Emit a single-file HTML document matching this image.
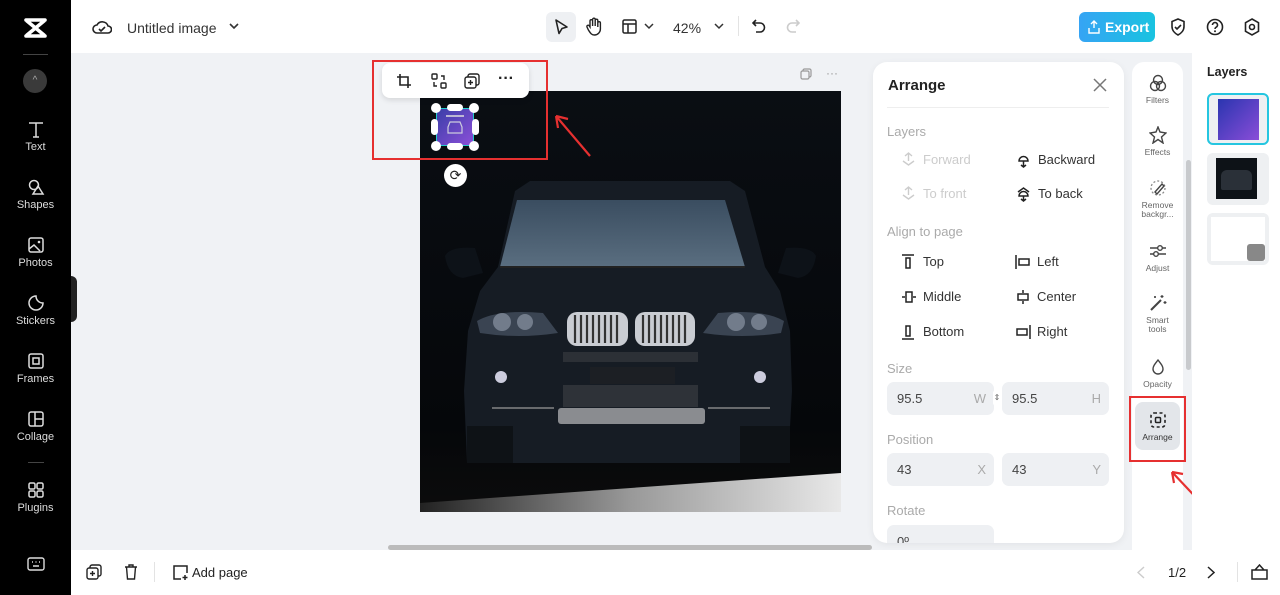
<!DOCTYPE html>
<html><head><meta charset="utf-8"><style>
*{box-sizing:border-box;margin:0;padding:0}
body{width:1280px;height:595px;overflow:hidden;font-family:"Liberation Sans",sans-serif;background:#f0f2f5;position:relative;color:#222}
.abs{position:absolute}
.side{left:0;top:0;width:71px;height:595px;background:#000}
.si{position:absolute;left:0;width:71px;text-align:center;color:#ddd;font-size:11px}
.si svg{display:block;margin:0 auto 3px}
.top{left:71px;top:0;width:1209px;height:53px;background:#fff}
.bot{left:71px;top:550px;width:1209px;height:45px;background:#fff}
.panel{left:873px;top:62px;width:251px;height:481px;background:#fff;border-radius:14px;box-shadow:0 2px 8px rgba(0,0,0,.06);overflow:hidden}
.lbl{position:absolute;font-size:13px;color:#aaa}
.it{position:absolute;font-size:13px;color:#333}
.it svg{position:absolute;left:-22px;top:0}
.inp{position:absolute;background:#eef0f3;border-radius:7px;height:33px;font-size:13px;color:#444;padding:9px 10px}
.inp span{position:absolute;right:8px;top:9px;color:#aaa}
.tools{left:1132px;top:62px;width:51px;height:488px;background:#fff;border-radius:12px 12px 0 0}
.tl{position:absolute;left:0;width:51px;text-align:center;font-size:8.5px;color:#666;line-height:9px}
.tl svg{display:block;margin:0 auto 4px}
.layers{left:1192px;top:53px;width:88px;height:497px;background:#fff}
</style></head><body>
<div class="abs side">
 <svg class="abs" style="left:23px;top:17px" width="25" height="22" viewBox="0 0 25 22"><path d="M3 3h19M3 19h19M4 4l17 14M21 4L4 18" stroke="#fff" stroke-width="3.6" fill="none" stroke-linecap="round"/></svg>
 <div class="abs" style="left:23px;top:54px;width:25px;height:1px;background:#444"></div>
 <div class="abs" style="left:23px;top:69px;width:24px;height:24px;border-radius:50%;background:#3a3a3a;color:#aaa;font-size:10px;text-align:center;line-height:24px">^</div>
 <div class="si" style="top:120px"><svg width="18" height="18" viewBox="0 0 18 18"><path d="M2 3h14M9 3v14M6 17h6" stroke="#ddd" stroke-width="1.5" fill="none"/></svg>Text</div>
 <div class="si" style="top:178px"><svg width="18" height="18" viewBox="0 0 18 18"><circle cx="7" cy="7" r="4.5" stroke="#ddd" stroke-width="1.5" fill="none"/><path d="M11 8l5 8H6z" stroke="#ddd" stroke-width="1.5" fill="none"/></svg>Shapes</div>
 <div class="si" style="top:236px"><svg width="18" height="18" viewBox="0 0 18 18"><rect x="2" y="2" width="14" height="14" rx="2" stroke="#ddd" stroke-width="1.5" fill="none"/><path d="M2 13l5-4 6 6" stroke="#ddd" stroke-width="1.5" fill="none"/><circle cx="12" cy="6" r="1.3" fill="#ddd"/></svg>Photos</div>
 <div class="si" style="top:294px"><svg width="18" height="18" viewBox="0 0 18 18"><path d="M9 2a7 7 0 1 0 7 7c-4 0-7-3-7-7z" stroke="#ddd" stroke-width="1.5" fill="none"/></svg>Stickers</div>
 <div class="si" style="top:352px"><svg width="18" height="18" viewBox="0 0 18 18"><rect x="2" y="2" width="14" height="14" rx="2" stroke="#ddd" stroke-width="1.5" fill="none"/><rect x="6" y="6" width="6" height="6" stroke="#ddd" stroke-width="1.5" fill="none"/></svg>Frames</div>
 <div class="si" style="top:410px"><svg width="18" height="18" viewBox="0 0 18 18"><rect x="2" y="2" width="14" height="14" rx="2" stroke="#ddd" stroke-width="1.5" fill="none"/><path d="M8 2v14M8 9h8" stroke="#ddd" stroke-width="1.5"/></svg>Collage</div>
 <div class="abs" style="left:28px;top:462px;width:16px;height:1px;background:#444"></div>
 <div class="si" style="top:481px"><svg width="18" height="18" viewBox="0 0 18 18"><rect x="2" y="2" width="6" height="6" rx="1.5" stroke="#ddd" stroke-width="1.5" fill="none"/><rect x="10" y="2" width="6" height="6" rx="1.5" stroke="#ddd" stroke-width="1.5" fill="none"/><rect x="2" y="10" width="6" height="6" rx="1.5" stroke="#ddd" stroke-width="1.5" fill="none"/><rect x="10" y="10" width="6" height="6" rx="1.5" stroke="#ddd" stroke-width="1.5" fill="none"/></svg>Plugins</div>
 <svg class="abs" style="left:27px;top:557px" width="18" height="14" viewBox="0 0 18 14"><rect x="1" y="1" width="16" height="12" rx="2" stroke="#ddd" stroke-width="1.4" fill="none"/><path d="M5 5h1M8.5 5h1M12 5h1M6 9h6" stroke="#ddd" stroke-width="1.4"/></svg>
</div>
<div class="abs" style="left:71px;top:276px;width:6px;height:46px;background:#222;border-radius:0 6px 6px 0"></div>
<div class="abs top">
 <svg class="abs" style="left:21px;top:19px" width="20" height="16" viewBox="0 0 20 16"><path d="M5 14a4 4 0 0 1 0-8 6 6 0 0 1 11 1 3.5 3.5 0 0 1 0 7z" stroke="#222" stroke-width="1.6" fill="none"/><path d="M7 10l2 2 4-4" stroke="#222" stroke-width="1.6" fill="none"/></svg>
 <div class="abs" style="left:56px;top:20px;font-size:14px;color:#333">Untitled image</div>
 <svg class="abs" style="left:158px;top:23px" width="10" height="7"><path d="M1 1l4 4 4-4" stroke="#333" stroke-width="1.6" fill="none"/></svg>
 <div class="abs" style="left:475px;top:12px;width:30px;height:30px;background:#eef0f3;border-radius:6px"></div>
 <svg class="abs" style="left:483px;top:18px" width="15" height="18" viewBox="0 0 15 18"><path d="M2 2l11 7-5 1.5-3 5z" stroke="#222" stroke-width="1.6" fill="none" stroke-linejoin="round"/></svg>
 <svg class="abs" style="left:515px;top:17px" width="16" height="19" viewBox="0 0 16 19"><path d="M4 10V4a1.3 1.3 0 0 1 2.6 0v5V2.5a1.3 1.3 0 0 1 2.6 0V9V3.5a1.3 1.3 0 0 1 2.6 0V10V6a1.3 1.3 0 0 1 2.6 0v6a6 6 0 0 1-6 6c-3 0-4-2-6-5L1 10a1.3 1.3 0 0 1 2-1.5z" stroke="#222" stroke-width="1.4" fill="none"/></svg>
 <svg class="abs" style="left:551px;top:19px" width="15" height="15"><rect x="1" y="1" width="13" height="13" rx="1.5" stroke="#222" stroke-width="1.5" fill="none"/><path d="M1 5h13M6 5v9" stroke="#222" stroke-width="1.5"/></svg>
 <svg class="abs" style="left:573px;top:23px" width="10" height="7"><path d="M1 1l4 4 4-4" stroke="#333" stroke-width="1.5" fill="none"/></svg>
 <div class="abs" style="left:602px;top:20px;font-size:14px;color:#333">42%</div>
 <svg class="abs" style="left:643px;top:23px" width="10" height="7"><path d="M1 1l4 4 4-4" stroke="#333" stroke-width="1.5" fill="none"/></svg>
 <div class="abs" style="left:667px;top:16px;width:1px;height:20px;background:#e3e3e3"></div>
 <svg class="abs" style="left:681px;top:18px" width="14" height="16" viewBox="0 0 14 16"><path d="M4 2L1 5l3 3M1 5h7a4.5 4.5 0 0 1 0 9H4" stroke="#222" stroke-width="1.6" fill="none"/></svg>
 <svg class="abs" style="left:715px;top:18px" width="14" height="16" viewBox="0 0 14 16"><path d="M10 2l3 3-3 3M13 5H6a4.5 4.5 0 0 0 0 9h4" stroke="#ccc" stroke-width="1.6" fill="none"/></svg>
 <div class="abs" style="left:1008px;top:12px;width:76px;height:30px;border-radius:6px;background:linear-gradient(90deg,#36a4f4,#19c3e0);color:#fff;font-size:14px;font-weight:bold;line-height:30px;padding-left:26px">Export</div>
 <svg class="abs" style="left:1017px;top:20px" width="12" height="14" viewBox="0 0 12 14"><path d="M6 1v7M3 4l3-3 3 3M1 8v5h10V8" stroke="#fff" stroke-width="1.4" fill="none"/></svg>
 <svg class="abs" style="left:1099px;top:18px" width="16" height="18" viewBox="0 0 16 18"><path d="M8 1l6 2.5v5c0 4-3 7-6 8.5-3-1.5-6-4.5-6-8.5v-5z" stroke="#222" stroke-width="1.6" fill="none"/><path d="M5 9l2 2 4-4" stroke="#222" stroke-width="1.6" fill="none"/></svg>
 <svg class="abs" style="left:1135px;top:18px" width="18" height="18" viewBox="0 0 18 18"><circle cx="9" cy="9" r="7.5" stroke="#222" stroke-width="1.6" fill="none"/><path d="M6.5 7a2.5 2.5 0 1 1 3.5 2.3c-.7.4-1 .8-1 1.7" stroke="#222" stroke-width="1.6" fill="none"/><circle cx="9" cy="13.3" r="1" fill="#222"/></svg>
 <svg class="abs" style="left:1173px;top:18px" width="16" height="18" viewBox="0 0 16 18"><path d="M8 1l6.5 3.7v8.6L8 17l-6.5-3.7V4.7z" stroke="#222" stroke-width="1.6" fill="none"/><circle cx="8" cy="9" r="2.5" stroke="#222" stroke-width="1.6" fill="none"/></svg>
</div>

<!-- canvas -->
<svg class="abs" style="left:800px;top:68px" width="12" height="12"><rect x="3" y="1" width="8" height="8" rx="1.5" stroke="#999" stroke-width="1.2" fill="none"/><rect x="1" y="3" width="8" height="8" rx="1.5" stroke="#999" stroke-width="1.2" fill="#f0f2f5"/></svg>
<div class="abs" style="left:826px;top:66px;color:#999;font-size:12px">···</div>
<svg class="abs" style="left:420px;top:91px" width="421" height="421" viewBox="0 0 421 421">
 <defs><linearGradient id="bg" x1="0" y1="0" x2="0" y2="1"><stop offset="0" stop-color="#0a0e13"/><stop offset=".8" stop-color="#05070a"/><stop offset="1" stop-color="#0c0c0c"/></linearGradient>
 <linearGradient id="fl" x1="0" y1="0" x2="1" y2="0"><stop offset="0" stop-color="#222"/><stop offset=".5" stop-color="#999"/><stop offset="1" stop-color="#e8e8e8"/></linearGradient>
 <linearGradient id="ws" x1="0" y1="0" x2="0" y2="1"><stop offset="0" stop-color="#3a4d60"/><stop offset="1" stop-color="#5a6e80"/></linearGradient></defs>
 <rect width="421" height="421" fill="url(#bg)"/>
 <path d="M0 421V412L421 382V421z" fill="url(#fl)"/>
 <path d="M95 100L110 90H310L325 100L345 176L360 200L370 240L372 300L368 372H47L44 300L48 240L60 200L78 176Z" fill="#161c24"/>
 <path d="M97 109h208l20 67H80z" fill="url(#ws)"/>
 <path d="M80 176h245" stroke="#222" stroke-width="2"/>
 <path d="M25 165q5-10 30-8l8 25-20 5q-15-2-18-22z" fill="#0d1218"/>
 <path d="M396 165q-5-10-30-8l-8 25 20 5q15-2 18-22z" fill="#0d1218"/>
 <path d="M57 230q20-12 66 -8l15 20q-40 6-78 0z" fill="#3a4452"/>
 <circle cx="82" cy="231" r="9" fill="#8a94a4" opacity=".7"/><circle cx="105" cy="231" r="8" fill="#8a94a4" opacity=".7"/>
 <path d="M364 230q-20-12-66-8l-15 20q40 6 78 0z" fill="#3a4452"/>
 <circle cx="316" cy="231" r="9" fill="#8a94a4" opacity=".7"/><circle cx="339" cy="231" r="8" fill="#8a94a4" opacity=".7"/>
 <rect x="147" y="221" width="61" height="34" rx="10" fill="#c9ccd2"/>
 <rect x="215" y="221" width="60" height="34" rx="10" fill="#c9ccd2"/>
 <g stroke="#333" stroke-width="2.2"><path d="M155 224v28M161 224v28M167 224v28M173 224v28M179 224v28M185 224v28M191 224v28M197 224v28M223 224v28M229 224v28M235 224v28M241 224v28M247 224v28M253 224v28M259 224v28M265 224v28"/></g>
 <rect x="143" y="261" width="135" height="10" fill="#2c3036"/>
 <circle cx="81" cy="286" r="6" fill="#ccd"/><circle cx="340" cy="286" r="6" fill="#ccd"/>
 <rect x="170" y="276" width="85" height="17" fill="#1c1f24"/>
 <rect x="143" y="294" width="135" height="22" fill="#2e3238"/>
 <path d="M72 317h62M288 317h62" stroke="#999" stroke-width="1.2"/>
 <rect x="138" y="317" width="147" height="16" rx="3" fill="#8a8c90"/>
 <rect x="47" y="335" width="46" height="37" fill="#0e1216"/>
 <rect x="320" y="335" width="50" height="37" fill="#0e1216"/>
</svg>
<div class="abs" style="left:382px;top:63px;width:147px;height:35px;background:#fff;border-radius:8px;box-shadow:0 2px 6px rgba(0,0,0,.12)"></div>
<svg class="abs" style="left:396px;top:73px" width="16" height="16"><path d="M4 1v11h11M1 4h11v11" stroke="#222" stroke-width="1.6" fill="none"/></svg>
<svg class="abs" style="left:431px;top:73px" width="16" height="16"><rect x="1" y="1" width="5" height="5" rx="1" stroke="#222" stroke-width="1.4" fill="none"/><rect x="10" y="10" width="5" height="5" rx="1" stroke="#222" stroke-width="1.4" fill="none"/><path d="M10 3h3v4M6 13H3V9" stroke="#222" stroke-width="1.4" fill="none"/></svg>
<svg class="abs" style="left:464px;top:73px" width="16" height="16"><rect x="4" y="1" width="11" height="11" rx="2" stroke="#222" stroke-width="1.4" fill="none"/><rect x="1" y="4" width="11" height="11" rx="2" stroke="#222" stroke-width="1.4" fill="#fff"/><path d="M6.5 7v5M4 9.5h5" stroke="#222" stroke-width="1.4"/></svg>
<div class="abs" style="left:498px;top:70px;font-size:16px;font-weight:bold">···</div>
<div class="abs" style="left:436px;top:108px;width:38px;height:38px;background:linear-gradient(135deg,#3b3ea8,#8b4fd8);border:1px solid #2cc"></div>
<svg class="abs" style="left:430px;top:102px" width="50" height="50"><g fill="#fff"><circle cx="6" cy="6" r="5"/><circle cx="44" cy="6" r="5"/><circle cx="6" cy="44" r="5"/><circle cx="44" cy="44" r="5"/><rect x="17" y="2" width="16" height="7" rx="3.5"/><rect x="17" y="41" width="16" height="7" rx="3.5"/><rect x="1" y="17" width="7" height="16" rx="3.5"/><rect x="42" y="17" width="7" height="16" rx="3.5"/></g><path d="M18 31v-6l2-5h10l2 5v6z" stroke="#ccd" fill="none" stroke-width="1.2"/><path d="M16 14h18" stroke="#ddd" stroke-width="1.5"/></svg>
<div class="abs" style="left:444px;top:164px;width:23px;height:23px;border-radius:50%;background:#fff;text-align:center;line-height:23px;font-size:14px;color:#222">⟳</div>
<div class="abs" style="left:372px;top:60px;width:176px;height:100px;border:2px solid #e63030"></div>
<svg class="abs" style="left:550px;top:112px" width="42" height="46"><path d="M40 44L6 4M6 4l2 12M6 4l12 3" stroke="#e63030" stroke-width="2.2" fill="none"/></svg>
<div class="abs" style="left:388px;top:545px;width:484px;height:5px;background:#bbb;border-radius:3px"></div>

<div class="abs panel">
 <div class="abs" style="left:15px;top:15px;font-size:15px;font-weight:bold;color:#222">Arrange</div>
 <svg class="abs" style="left:220px;top:16px" width="14" height="14"><path d="M1 1l12 12M13 1L1 13" stroke="#777" stroke-width="1.5"/></svg>
 <div class="abs" style="left:14px;top:45px;width:222px;height:1px;background:#eee"></div>
 <div class="lbl" style="left:14px;top:62px">Layers</div>
 <div class="it" style="left:50px;top:90px;color:#ccc"><svg width="15" height="16"><path d="M7.5 1v8M4 4l3.5-3 3.5 3M2 9l5.5 4 5.5-4" stroke="#ccc" stroke-width="1.4" fill="none"/></svg>Forward</div>
 <div class="it" style="left:165px;top:90px"><svg width="15" height="16"><path d="M3 9a4 4 0 1 1 9 0H3zM7.5 9v6M5 13l2.5 2 2.5-2" stroke="#222" stroke-width="1.5" fill="none"/></svg>Backward</div>
 <div class="it" style="left:50px;top:124px;color:#ccc"><svg width="15" height="16"><path d="M7.5 1v8M4 4l3.5-3 3.5 3M2 9l5.5 4 5.5-4" stroke="#ccc" stroke-width="1.4" fill="none"/></svg>To front</div>
 <div class="it" style="left:165px;top:124px"><svg width="15" height="16"><path d="M2 6l5.5-4 5.5 4M3 10a4 4 0 1 1 9 0zM7.5 10v5M5 13l2.5 2 2.5-2" stroke="#222" stroke-width="1.5" fill="none"/></svg>To back</div>
 <div class="lbl" style="left:14px;top:162px">Align to page</div>
 <div class="it" style="left:50px;top:192px"><svg width="14" height="16"><path d="M1 1h12M5 4h4v10H5z" stroke="#222" stroke-width="1.5" fill="none"/></svg>Top</div>
 <div class="it" style="left:164px;top:192px"><svg width="16" height="16"><path d="M1 1v14M4 5h10v6H4z" stroke="#222" stroke-width="1.5" fill="none"/></svg>Left</div>
 <div class="it" style="left:50px;top:227px"><svg width="16" height="16"><path d="M1 8h3M12 8h3M5 3h6v10H5z" stroke="#222" stroke-width="1.5" fill="none"/></svg>Middle</div>
 <div class="it" style="left:164px;top:227px"><svg width="16" height="16"><path d="M8 1v3M8 12v3M3 5h10v6H3z" stroke="#222" stroke-width="1.5" fill="none"/></svg>Center</div>
 <div class="it" style="left:50px;top:262px"><svg width="14" height="16"><path d="M1 15h12M5 2h4v10H5z" stroke="#222" stroke-width="1.5" fill="none"/></svg>Bottom</div>
 <div class="it" style="left:164px;top:262px"><svg width="16" height="16"><path d="M15 1v14M2 5h10v6H2z" stroke="#222" stroke-width="1.5" fill="none"/></svg>Right</div>
 <div class="lbl" style="left:14px;top:299px">Size</div>
 <div class="inp" style="left:14px;top:320px;width:107px">95.5<span>W</span></div>
 <div class="abs" style="left:120px;top:328px;width:8px;height:16px;background:#fff;border-radius:3px;font-size:8px;color:#666;text-align:center;line-height:16px">⇕</div>
 <div class="inp" style="left:129px;top:320px;width:107px">95.5<span>H</span></div>
 <div class="lbl" style="left:14px;top:370px">Position</div>
 <div class="inp" style="left:14px;top:391px;width:107px">43<span>X</span></div>
 <div class="inp" style="left:129px;top:391px;width:107px">43<span>Y</span></div>
 <div class="lbl" style="left:14px;top:441px">Rotate</div>
 <div class="inp" style="left:14px;top:463px;width:107px">0º</div>
</div>

<div class="abs tools">
 <div class="tl" style="top:12px"><svg width="18" height="18"><circle cx="9" cy="6" r="4.5" stroke="#444" stroke-width="1.4" fill="none"/><circle cx="6" cy="12" r="4.5" stroke="#444" stroke-width="1.4" fill="none"/><circle cx="12" cy="12" r="4.5" stroke="#444" stroke-width="1.4" fill="none"/></svg>Filters</div>
 <div class="tl" style="top:64px"><svg width="18" height="18"><path d="M9 1l2 5 6 1-4.5 4 1.5 6-5-3.5L4 17l1.5-6L1 7l6-1z" stroke="#444" stroke-width="1.4" fill="none"/></svg>Effects</div>
 <div class="tl" style="top:117px"><svg width="18" height="18"><circle cx="9" cy="9" r="7" stroke="#888" stroke-width="1.3" stroke-dasharray="2 2" fill="none"/><path d="M6 13l7-8 2 2-7 8z" stroke="#444" stroke-width="1.4" fill="#fff"/></svg>Remove<br>backgr...</div>
 <div class="tl" style="top:180px"><svg width="18" height="18"><path d="M1 6h16M1 12h16" stroke="#444" stroke-width="1.4"/><circle cx="11" cy="6" r="2.3" fill="#fff" stroke="#444" stroke-width="1.4"/><circle cx="7" cy="12" r="2.3" fill="#fff" stroke="#444" stroke-width="1.4"/></svg>Adjust</div>
 <div class="tl" style="top:232px"><svg width="18" height="18"><path d="M2 16L12 6" stroke="#444" stroke-width="2"/><path d="M13 1v3M11.5 2.5h3M16 7v3M14.5 8.5h3M6 2v2M5 3h2" stroke="#444" stroke-width="1.2"/></svg>Smart<br>tools</div>
 <div class="tl" style="top:296px"><svg width="18" height="18"><path d="M9 2c3 4 5 6 5 9a5 5 0 0 1-10 0c0-3 2-5 5-9z" stroke="#444" stroke-width="1.4" fill="none"/></svg>Opacity</div>
 <div class="abs" style="left:3px;top:340px;width:45px;height:48px;background:#e3e6ea;border-radius:8px"></div>
 <div class="tl" style="top:349px;color:#333"><svg width="18" height="18"><rect x="2" y="2" width="14" height="14" rx="3" stroke="#222" stroke-width="1.6" stroke-dasharray="3 2.5" fill="none"/><rect x="6.5" y="6.5" width="5" height="5" rx="1" stroke="#222" stroke-width="1.5" fill="none"/></svg>Arrange</div>
</div>
<div class="abs" style="left:1129px;top:396px;width:57px;height:66px;border:2px solid #e63030"></div>
<div class="abs" style="left:1186px;top:160px;width:5px;height:210px;background:#c8cacd;border-radius:3px"></div>
<svg class="abs" style="left:1168px;top:468px" width="40" height="40"><path d="M36 38L4 4M4 4l2 11M4 4l11 2" stroke="#e63030" stroke-width="2.2" fill="none"/></svg>

<div class="abs layers">
 <div class="abs" style="left:15px;top:12px;font-size:12.5px;font-weight:bold">Layers</div>
 <div class="abs" style="left:15px;top:40px;width:62px;height:52px;border:2px solid #25c6e0;border-radius:6px;background:#eef0f2"><div class="abs" style="left:9px;top:4px;width:41px;height:41px;background:linear-gradient(135deg,#2a35b0,#8a4dd8)"></div></div>
 <div class="abs" style="left:15px;top:100px;width:62px;height:52px;border-radius:6px;background:#eef0f2"><div class="abs" style="left:9px;top:5px;width:41px;height:41px;background:#0d1217"><div class="abs" style="left:5px;top:12px;width:31px;height:20px;background:#2a3038;border-radius:6px 6px 2px 2px"></div></div></div>
 <div class="abs" style="left:15px;top:160px;width:62px;height:52px;border-radius:6px;background:#eef0f2"><div class="abs" style="left:4px;top:4px;width:54px;height:44px;background:#fff"></div><div class="abs" style="left:40px;top:31px;width:18px;height:17px;background:#888;border-radius:3px"></div></div>
</div>

<div class="abs bot">
 <svg class="abs" style="left:15px;top:14px" width="16" height="16"><rect x="4" y="1" width="11" height="11" rx="2" stroke="#222" stroke-width="1.4" fill="none"/><rect x="1" y="4" width="11" height="11" rx="2" stroke="#222" stroke-width="1.4" fill="#fff"/><path d="M6.5 7v5M4 9.5h5" stroke="#222" stroke-width="1.4"/></svg>
 <svg class="abs" style="left:53px;top:14px" width="14" height="16"><path d="M1 3h12M5 3V1h4v2M2.5 3l1 12h7l1-12" stroke="#222" stroke-width="1.4" fill="none"/></svg>
 <div class="abs" style="left:83px;top:12px;width:1px;height:20px;background:#e3e3e3"></div>
 <svg class="abs" style="left:101px;top:14px" width="17" height="17"><path d="M9 15H2V2h13v7M13 11v5M10.5 13.5h5" stroke="#222" stroke-width="1.5" fill="none"/></svg>
 <div class="abs" style="left:121px;top:15px;font-size:13px;color:#222">Add page</div>
 <svg class="abs" style="left:1066px;top:16px" width="8" height="13"><path d="M7 1L1 6.5 7 12" stroke="#ccc" stroke-width="1.4" fill="none"/></svg>
 <div class="abs" style="left:1097px;top:15px;font-size:13px;color:#222">1/2</div>
 <svg class="abs" style="left:1136px;top:16px" width="8" height="13"><path d="M1 1l6 5.5L1 12" stroke="#222" stroke-width="1.5" fill="none"/></svg>
 <div class="abs" style="left:1166px;top:12px;width:1px;height:20px;background:#e3e3e3"></div>
 <svg class="abs" style="left:1180px;top:13px" width="17" height="17"><path d="M1 7h15v9H1zM4 7l4.5-5 4.5 5" stroke="#222" stroke-width="1.5" fill="none"/></svg>
</div>
</body></html>
